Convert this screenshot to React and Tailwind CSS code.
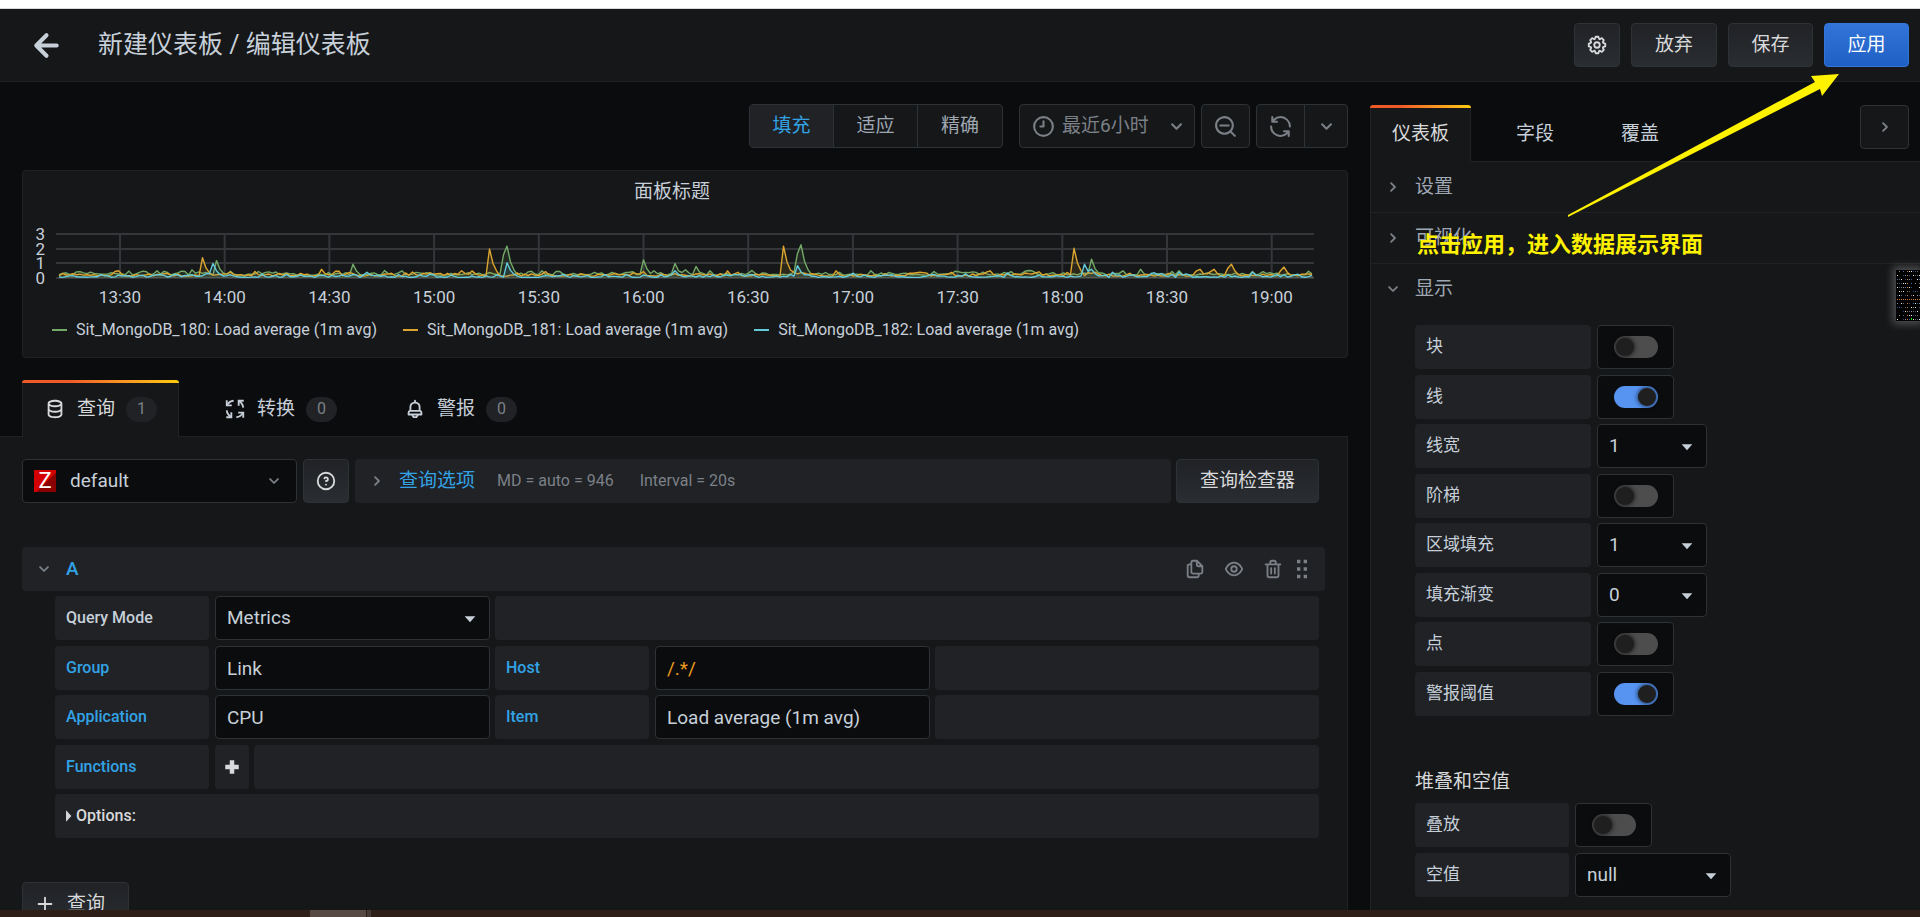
import { useState } from "react";
import clsx from "clsx";

const ICONS = {
	arrowLeft:
		"M17,11H9.41l3.3-3.29a1,1,0,1,0-1.42-1.42l-5,5a1,1,0,0,0-.21.33,1,1,0,0,0,0,.76,1,1,0,0,0,.21.33l5,5a1,1,0,0,0,1.42,0,1,1,0,0,0,0-1.42L9.41,13H17a1,1,0,0,0,0-2Z",
	angleDown:
		"M17,9.17a1,1,0,0,0-1.41,0L12,12.71,8.46,9.17a1,1,0,0,0-1.41,0,1,1,0,0,0,0,1.42l4.24,4.24a1,1,0,0,0,1.42,0L17,10.59A1,1,0,0,0,17,9.17Z",
	angleRight:
		"M14.83,11.29,10.59,7.05a1,1,0,0,0-1.42,0,1,1,0,0,0,0,1.41L12.71,12,9.17,15.54a1,1,0,0,0,0,1.41,1,1,0,0,0,.71.29,1,1,0,0,0,.71-.29l4.24-4.24A1,1,0,0,0,14.83,11.29Z",
	clock: "M12,2A10,10,0,1,0,22,12,10,10,0,0,0,12,2Zm0,18a8,8,0,1,1,8-8A8,8,0,0,1,12,20ZM12,6a1,1,0,0,0-1,1v4H9a1,1,0,0,0,0,2h3a1,1,0,0,0,1-1V7A1,1,0,0,0,12,6Z",
	question:
		"M11.29,15.29a1.58,1.58,0,0,0-.12.15.76.76,0,0,0-.09.18.64.64,0,0,0-.06.18,1.36,1.36,0,0,0,0,.2.84.84,0,0,0,.08.38.9.9,0,0,0,.54.54.94.94,0,0,0,.76,0,.9.9,0,0,0,.54-.54A1,1,0,0,0,13,16a1,1,0,0,0-.29-.71A1,1,0,0,0,11.29,15.29ZM12,2A10,10,0,1,0,22,12,10,10,0,0,0,12,2Zm0,18a8,8,0,1,1,8-8A8,8,0,0,1,12,20ZM12,7A3,3,0,0,0,9.4,8.5a1,1,0,1,0,1.73,1A1,1,0,0,1,12,9a1,1,0,0,1,0,2,1,1,0,1,0,0,2,3,3,0,0,0,0-6Z",
	searchMinus:
		"M21.71,20.29,18,16.61A9,9,0,1,0,16.61,18l3.68,3.68a1,1,0,0,0,1.42,0A1,1,0,0,0,21.71,20.29ZM11,18a7,7,0,1,1,7-7A7,7,0,0,1,11,18Zm4-8H7a1,1,0,0,0,0,2h8a1,1,0,0,0,0-2Z",
	sync: "M19.91,15.51H15.38a1,1,0,0,0,0,2h2.4A8,8,0,0,1,4,12a1,1,0,0,0-2,0,10,10,0,0,0,16.88,7.23V21a1,1,0,0,0,2,0V16.5A1,1,0,0,0,19.91,15.51ZM12,2A10,10,0,0,0,5.12,4.77V3a1,1,0,0,0-2,0V7.5a1,1,0,0,0,1,1h4.5a1,1,0,0,0,0-2H6.22A8,8,0,0,1,20,12a1,1,0,0,0,2,0A10,10,0,0,0,12,2Z",
	cog: "M21.32,9.55l-1.89-.63.89-1.78A1,1,0,0,0,20.13,6L18,3.87a1,1,0,0,0-1.15-.19l-1.78.89-.63-1.89A1,1,0,0,0,13.5,2h-3a1,1,0,0,0-.95.68L8.92,4.57,7.14,3.68A1,1,0,0,0,6,3.87L3.87,6a1,1,0,0,0-.19,1.15l.89,1.78-1.89.63A1,1,0,0,0,2,10.5v3a1,1,0,0,0,.68.95l1.89.63-.89,1.78A1,1,0,0,0,3.87,18L6,20.13a1,1,0,0,0,1.15.19l1.78-.89.63,1.89a1,1,0,0,0,.95.68h3a1,1,0,0,0,.95-.68l.63-1.89,1.78.89A1,1,0,0,0,18,20.13L20.13,18a1,1,0,0,0,.19-1.15l-.89-1.78,1.89-.63A1,1,0,0,0,22,13.5v-3A1,1,0,0,0,21.32,9.55ZM20,12.78l-1.2.4A2,2,0,0,0,17.64,16l.57,1.14-1.1,1.1L16,17.64a2,2,0,0,0-2.79,1.16l-.4,1.2H11.22l-.4-1.2A2,2,0,0,0,8,17.64l-1.14.57-1.1-1.1L6.36,16A2,2,0,0,0,5.2,13.18L4,12.78V11.22l1.2-.4A2,2,0,0,0,6.36,8L5.79,6.89l1.1-1.1L8,6.36A2,2,0,0,0,10.82,5.2l.4-1.2h1.56l.4,1.2A2,2,0,0,0,16,6.36l1.14-.57,1.1,1.1L17.64,8a2,2,0,0,0,1.16,2.79l1.2.4ZM12,8a4,4,0,1,0,4,4A4,4,0,0,0,12,8Zm0,6a2,2,0,1,1,2-2A2,2,0,0,1,12,14Z",
	database:
		"M12,2C8,2,4,3.37,4,6V18c0,2.63,4,4,8,4s8-1.37,8-4V6C20,3.37,16,2,12,2Zm6,16c0,.71-2.28,2-6,2s-6-1.29-6-2V14.73A13.16,13.16,0,0,0,12,16a13.16,13.16,0,0,0,6-1.27Zm0-6c0,.71-2.28,2-6,2s-6-1.29-6-2V8.73A13.16,13.16,0,0,0,12,10a13.16,13.16,0,0,0,6-1.27ZM12,8C8.28,8,6,6.71,6,6s2.28-2,6-2,6,1.29,6,2S15.72,8,12,8Z",
	bell: "M18,13.18V10a6,6,0,0,0-5-5.91V3a1,1,0,0,0-2,0V4.09A6,6,0,0,0,6,10v3.18A3,3,0,0,0,4,16v2a1,1,0,0,0,1,1H8.14a4,4,0,0,0,7.72,0H19a1,1,0,0,0,1-1V16A3,3,0,0,0,18,13.18ZM8,10a4,4,0,0,1,8,0v3H8Zm4,10a2,2,0,0,1-1.72-1h3.44A2,2,0,0,1,12,20Zm6-3H6V16a1,1,0,0,1,1-1H17a1,1,0,0,1,1,1Z",
	eye: "M21.92,11.6C19.9,6.91,16.1,4,12,4S4.1,6.91,2.08,11.6a1,1,0,0,0,0,.8C4.1,17.09,7.9,20,12,20s7.9-2.91,9.92-7.6A1,1,0,0,0,21.92,11.6ZM12,18c-3.17,0-6.17-2.29-7.9-6C5.83,8.29,8.83,6,12,6s6.17,2.29,7.9,6C18.17,15.71,15.17,18,12,18ZM12,8a4,4,0,1,0,4,4A4,4,0,0,0,12,8Zm0,6a2,2,0,1,1,2-2A2,2,0,0,1,12,14Z",
	trash: "M10,18a1,1,0,0,0,1-1V11a1,1,0,0,0-2,0v6A1,1,0,0,0,10,18ZM20,6H16V5a3,3,0,0,0-3-3H11A3,3,0,0,0,8,5V6H4A1,1,0,0,0,4,8H5V19a3,3,0,0,0,3,3h8a3,3,0,0,0,3-3V8h1a1,1,0,0,0,0-2ZM10,5a1,1,0,0,1,1-1h2a1,1,0,0,1,1,1V6H10Zm7,14a1,1,0,0,1-1,1H8a1,1,0,0,1-1-1V8H17Zm-3-1a1,1,0,0,0,1-1V11a1,1,0,0,0-2,0v6A1,1,0,0,0,14,18Z",
	copy: "M21,8.94a1.31,1.31,0,0,0-.06-.27l0-.09a1.07,1.07,0,0,0-.19-.28h0l-6-6h0a1.07,1.07,0,0,0-.28-.19.32.32,0,0,0-.09,0A.88.88,0,0,0,14.05,2H10A3,3,0,0,0,7,5V6H6A3,3,0,0,0,3,9V19a3,3,0,0,0,3,3h8a3,3,0,0,0,3-3V18h1a3,3,0,0,0,3-3V9S21,9,21,8.94ZM15,5.41,17.59,8H16a1,1,0,0,1-1-1ZM15,19a1,1,0,0,1-1,1H6a1,1,0,0,1-1-1V9A1,1,0,0,1,6,8H7v7a3,3,0,0,0,3,3h5Zm4-4a1,1,0,0,1-1,1H10a1,1,0,0,1-1-1V5a1,1,0,0,1,1-1h3V7a3,3,0,0,0,3,3h3Z",
	plus: "M19,11H13V5a1,1,0,0,0-2,0v6H5a1,1,0,0,0,0,2h6v6a1,1,0,0,0,2,0V13h6a1,1,0,0,0,0-2Z",
	plusBold: "M9,3h6v6h6v6h-6v6H9v-6H3V9h6Z",
	caretDown: "M4,8H20L12,17Z",
	caretRight: "M7,2L16,12L7,22Z",
	dots: "M6,1h4v4H6ZM14,1h4v4h-4ZM6,10h4v4H6ZM14,10h4v4h-4ZM6,19h4v4H6ZM14,19h4v4h-4Z",
};

function Icon({ name, className }) {
	return (
		<svg
			viewBox="0 0 24 24"
			fill="currentColor"
			aria-hidden="true"
			className={clsx("shrink-0", className)}
		>
			<path d={ICONS[name]} />
		</svg>
	);
}

function TransformIcon({ className }) {
	return (
		<svg
			viewBox="0 0 24 24"
			fill="none"
			stroke="currentColor"
			strokeWidth="2"
			aria-hidden="true"
			className={clsx("shrink-0", className)}
		>
			<path d="M10.500 3C7.500 3.300 5 5 3.500 7.500M13.500 21c3-.3 5.500-2 7-4.500M3 13.500c.3 3 2 5.500 4.500 7M21 10.500c-.3-3-2-5.500-4.500-7" />
			<path d="M3 2.500V8H8.500M21 21.500V16H15.500M2.500 21H8V15.500M21.500 3H16V8.500" />
		</svg>
	);
}

// [x, value] peaks of each host
const SERIES = [
	{
		name: "Sit_MongoDB_180: Load average (1m avg)",
		color: "#73a866",
		base: 0.2,
		noise: 0.4,
		peaks: [
			[195, 1.2],
			[331, 0.95],
			[482, 1.6],
			[485, 2.2],
			[621, 1.25],
			[653, 1],
			[674, 0.8],
			[688, 0.5],
			[775, 1.7],
			[779, 2.3],
			[849, 0.5],
			[912, 0.45],
			[1068, 1.3],
			[1100, 0.5],
			[1118, 0.6],
		],
	},
	{
		name: "Sit_MongoDB_181: Load average (1m avg)",
		color: "#dba52f",
		base: 0.13,
		noise: 0.38,
		peaks: [
			[178, 1.4],
			[231, 0.45],
			[300, 0.6],
			[440, 0.5],
			[468, 2],
			[762, 2.2],
			[812, 0.5],
			[896, 0.4],
			[968, 0.5],
			[1052, 2.05],
			[1173, 0.5],
			[1178, 0.6],
			[1192, 0.6],
			[1204, 0.7],
			[1209, 0.95],
			[1258, 0.5],
			[1262, 0.75],
		],
	},
	{
		name: "Sit_MongoDB_182: Load average (1m avg)",
		color: "#64c9d9",
		base: 0.04,
		noise: 0.3,
		peaks: [
			[190, 1],
			[343, 0.4],
			[483, 1.05],
			[651, 0.5],
			[773, 0.85],
			[983, 0.35],
			[1063, 0.95],
			[1069, 0.6],
			[1088, 0.4],
			[1157, 0.4],
			[1228, 0.4],
		],
	},
];

const PLOT = { left: 33, right: 1291, zero: 56, unit: 14.5, step: 3.5 };
const TIMES = [
	"13:30",
	"14:00",
	"14:30",
	"15:00",
	"15:30",
	"16:00",
	"16:30",
	"17:00",
	"17:30",
	"18:00",
	"18:30",
	"19:00",
];
const timeX = (i) => 97 + i * 104.7;

function buildPoints({ base, noise, peaks }, seed) {
	const count = Math.floor((PLOT.right - PLOT.left - 3) / PLOT.step);
	let state = seed;
	const random = () => {
		state = (state * 16807) % 2147483647;
		return state / 2147483647;
	};
	let level = 0.5;
	const values = Array.from({ length: count + 1 }, () => {
		level = level * 0.55 + random() * 0.45;
		return base + Math.max(0, level - 0.22) * noise * 1.8 * random();
	});

	peaks.forEach(([x, value]) => {
		const at = Math.round((x - PLOT.left - 3) / PLOT.step);
		[1, 0.5, 0.25].forEach((factor, i) => {
			if (at + i <= count) {
				values[at + i] = Math.max(values[at + i], value * factor);
			}
		});
	});

	return values.map((value, i) => {
		const x = PLOT.left + 3 + i * PLOT.step;
		const y = PLOT.zero - value * PLOT.unit;
		return `${x},${y.toFixed(1)}`;
	});
}

function Graph() {
	return (
		<svg
			viewBox="0 0 1324 90"
			className="block w-full h-auto"
			role="img"
			aria-label="面板标题"
		>
			<g stroke="#34363a" strokeWidth="2">
				{[0, 1, 2, 3].map((n) => (
					<line
						key={n}
						x1={PLOT.left}
						x2={PLOT.right}
						y1={PLOT.zero - Math.round(n * PLOT.unit)}
						y2={PLOT.zero - Math.round(n * PLOT.unit)}
					/>
				))}
				{TIMES.map((time, i) => (
					<line
						key={time}
						x1={timeX(i)}
						x2={timeX(i)}
						y1={12}
						y2={PLOT.zero}
					/>
				))}
			</g>
			{SERIES.map((series, i) => {
				const points = buildPoints(series, 4711 + i * 977);
				return (
					<g key={series.name}>
						<polygon
							points={`${PLOT.left + 3},${PLOT.zero} ${points.join(" ")} ${PLOT.right},${PLOT.zero}`}
							fill={series.color}
							fillOpacity="0.12"
						/>
						<polyline
							points={points.join(" ")}
							fill="none"
							stroke={series.color}
							strokeWidth="1.4"
							strokeLinejoin="round"
						/>
					</g>
				);
			})}
			<g fill="#c7d0d9" fontSize="17">
				{[0, 1, 2, 3].map((n) => (
					<text
						key={n}
						x="22"
						y={PLOT.zero + 6 - Math.round(n * PLOT.unit)}
						textAnchor="end"
					>
						{n}
					</text>
				))}
				{TIMES.map((time, i) => (
					<text key={time} x={timeX(i)} y="81" textAnchor="middle">
						{time}
					</text>
				))}
			</g>
		</svg>
	);
}

function Tab({ active, children, className, onClick }) {
	return (
		<button
			type="button"
			role="tab"
			aria-selected={active}
			onClick={onClick}
			className={clsx(
				"relative flex items-center gap-[11px] h-[57px] -mb-px px-[21px] border border-b-0 rounded-t-sm text-[19px]",
				active
					? "border-[#202226] bg-[#161719] text-[#d8d9da]"
					: "border-transparent text-[#c7d0d9]",
				className
			)}
		>
			{active && (
				<span className="absolute -inset-x-px -top-px h-[3px] rounded-t-sm bg-linear-to-r from-[#f05a28] from-30% to-[#fbca0a]" />
			)}
			{children}
		</button>
	);
}

function Badge({ children }) {
	return (
		<span className="flex items-center justify-center w-[31px] h-[25px] rounded-full bg-[#202226] text-[16px] text-[#7b8087]">
			{children}
		</span>
	);
}

function Button({ className, children, ...props }) {
	return (
		<button
			type="button"
			className={clsx(
				"flex items-center justify-center h-11 rounded-sm border text-[19px]",
				className
			)}
			{...props}
		>
			{children}
		</button>
	);
}

const SECONDARY =
	"border-[#2c3235] bg-linear-to-b from-[#202226] to-[#2a2d31] text-[#d8d9da]";
const TOOLBAR = "border-[#2c3235] bg-[#161719] text-[#7b8087]";

function Select({ id, options, className }) {
	return (
		<span className={clsx("grid h-11", className)}>
			<select
				id={id}
				className="col-start-1 row-start-1 appearance-none w-full h-11 px-[11px] rounded-sm border border-[#2c3235] bg-[#0b0c0e] text-[19px] text-[#c7d0d9]"
			>
				{options.map((option) => (
					<option key={option}>{option}</option>
				))}
			</select>
			<Icon
				name="caretDown"
				className="col-start-1 row-start-1 self-center justify-self-end w-4 h-4 mr-3 mt-0.5 text-[#c7d0d9] pointer-events-none"
			/>
		</span>
	);
}

function Switch({ id, defaultChecked }) {
	return (
		<span className="flex items-center justify-center w-[77px] h-11 rounded-sm border border-[#2c3235] bg-[#0b0c0e]">
			<input
				id={id}
				type="checkbox"
				role="switch"
				defaultChecked={defaultChecked}
				className="appearance-none w-11 h-[22px] p-0.5 rounded-full bg-[#4d4d4d] checked:bg-[#5794f2] before:block before:w-[18px] before:h-[18px] before:rounded-full before:bg-[#1f1f20] before:shadow-[0_0_4px_1px_rgba(0,0,0,0.6)] checked:before:translate-x-[22px]"
			/>
		</span>
	);
}

function OptionRow({ id, label, options, checked, labelClass, selectClass }) {
	return (
		<div className="flex gap-[6px] odd:mb-[6px] even:mb-[5px]">
			<label
				htmlFor={id}
				className={clsx(
					"flex items-center h-11 px-[11px] rounded-sm bg-[#202226] text-[17px] text-[#c7d0d9]",
					labelClass
				)}
			>
				{label}
			</label>
			{options ? (
				<Select id={id} options={options} className={selectClass} />
			) : (
				<Switch id={id} defaultChecked={checked} />
			)}
		</div>
	);
}

function FieldLabel({ htmlFor, children, plain }) {
	return (
		<label
			htmlFor={htmlFor}
			className={clsx(
				"flex items-center shrink-0 w-[154px] h-11 mr-px px-[11px] rounded-sm bg-[#202226] text-[16px] font-medium",
				plain ? "text-[#c7d0d9]" : "text-[#33a2e5]"
			)}
		>
			{children}
		</label>
	);
}

function Field({ id, value, className }) {
	return (
		<input
			id={id}
			type="text"
			defaultValue={value}
			className={clsx(
				"shrink-0 w-[275px] h-11 px-[11px] rounded-sm border border-[#2c3235] bg-[#0b0c0e] text-[19px]",
				className
			)}
		/>
	);
}

function Filler() {
	return <div className="flex-1 h-11 rounded-sm bg-[#202226]" />;
}

const ROW = "flex gap-[5px] odd:mb-[6px] even:mb-[5px]";

function QueryEditor() {
	return (
		<div className="mt-11">
			<div className="flex items-center h-11 -mr-1.5 pl-[11px] pr-[13px] rounded-sm bg-[#202226]">
				<Icon name="angleDown" className="w-[22px] h-[22px] text-[#7b8087]" />
				<span className="flex-1 pl-[11px] text-[19px] font-medium text-[#33a2e5]">
					A
				</span>
				<div className="flex items-center text-[#7b8087]">
					<button type="button" aria-label="复制" className="mr-[17px]">
						<Icon name="copy" className="w-[22px] h-[22px]" />
					</button>
					<button type="button" aria-label="隐藏" className="mr-[17px]">
						<Icon name="eye" className="w-[22px] h-[22px]" />
					</button>
					<button type="button" aria-label="删除" className="mr-2">
						<Icon name="trash" className="w-[22px] h-[22px]" />
					</button>
					<Icon name="dots" className="w-5 h-5" />
				</div>
			</div>

			<div className="mt-[5px] pl-[33px]">
				<div className={ROW}>
					<FieldLabel htmlFor="query-mode" plain>
						Query Mode
					</FieldLabel>
					<Select
						id="query-mode"
						options={["Metrics", "Text"]}
						className="w-[275px]"
					/>
					<Filler />
				</div>
				<div className={ROW}>
					<FieldLabel htmlFor="group">Group</FieldLabel>
					<Field id="group" value="Link" className="text-[#c7d0d9]" />
					<FieldLabel htmlFor="host">Host</FieldLabel>
					<Field id="host" value="/.*/" className="text-[#eb9b1e]" />
					<Filler />
				</div>
				<div className={ROW}>
					<FieldLabel htmlFor="application">Application</FieldLabel>
					<Field id="application" value="CPU" className="text-[#c7d0d9]" />
					<FieldLabel htmlFor="item">Item</FieldLabel>
					<Field
						id="item"
						value="Load average (1m avg)"
						className="text-[#c7d0d9]"
					/>
					<Filler />
				</div>
				<div className={ROW}>
					<FieldLabel htmlFor="functions">Functions</FieldLabel>
					<button
						id="functions"
						type="button"
						className="flex items-center justify-center w-[34px] h-11 rounded-sm bg-[#202226] text-[#d8d9da]"
					>
						<Icon name="plusBold" className="w-[18px] h-[18px]" />
					</button>
					<Filler />
				</div>
				<button
					type="button"
					className="flex items-center gap-1 w-full h-11 px-[11px] rounded-sm bg-[#202226] text-[16px] font-medium text-[#d8d9da]"
				>
					<Icon name="caretRight" className="w-[14px] h-[14px] -mx-1" />
					Options:
				</button>
			</div>
		</div>
	);
}

function QueryPanel() {
	return (
		<div className="flex-1 pt-[22px] pl-[22px] pr-7 mr-[22px] border-r border-[#202226] bg-[#161719]">
			<div className="flex">
				<label className="flex items-center w-[275px] h-11 px-[11px] rounded-sm border border-[#2c3235] bg-[#0b0c0e] text-[#c7d0d9]">
					<span className="flex items-center justify-center w-[22px] h-[22px] bg-linear-135 from-[#d40000] from-55% to-[#8b0000] to-55% text-[22px] leading-[22px] text-white">
						Z
					</span>
					<select
						aria-label="数据源"
						className="flex-1 appearance-none pl-[14px] text-[19px]"
					>
						<option>default</option>
					</select>
					<Icon name="angleDown" className="w-[22px] h-[22px] text-[#7b8087]" />
				</label>
				<Button aria-label="帮助" className={clsx("w-[46px] ml-1.5", SECONDARY)}>
					<Icon name="question" className="w-[22px] h-[22px]" />
				</Button>
				<div className="flex flex-1 items-center h-11 ml-1.5 mr-[5px] pl-[11px] rounded-sm bg-[#202226]">
					<Icon name="angleRight" className="w-[22px] h-[22px] text-[#7b8087]" />
					<a href="#options" className="ml-[11px] text-[19px] text-[#33a2e5]">
						查询选项
					</a>
					<span className="ml-[22px] text-[16px] text-[#7b8087]">
						MD = auto = 946
					</span>
					<span className="ml-[26px] text-[16px] text-[#7b8087]">
						Interval = 20s
					</span>
				</div>
				<Button className={clsx("w-[143px]", SECONDARY)}>查询检查器</Button>
			</div>

			<QueryEditor />

			<Button className={clsx("mt-11 pl-[11px] pr-[23px] gap-[11px]", SECONDARY)}>
				<Icon name="plus" className="w-[22px] h-[22px]" />
				查询
			</Button>
		</div>
	);
}

function SectionHeader({ open, children }) {
	return (
		<button
			type="button"
			aria-expanded={open}
			className="flex items-center gap-[11px] w-full h-[50px] pl-[11px] text-[19px] text-[#9fa7b3]"
		>
			<Icon
				name={open ? "angleDown" : "angleRight"}
				className="w-[22px] h-[22px] text-[#7b8087]"
			/>
			{children}
		</button>
	);
}

const DISPLAY_OPTIONS = [
	{ id: "bars", label: "块" },
	{ id: "lines", label: "线", checked: true },
	{ id: "line-width", label: "线宽", options: ["1", "2", "3"] },
	{ id: "staircase", label: "阶梯" },
	{ id: "area-fill", label: "区域填充", options: ["1", "2", "3"] },
	{ id: "fill-gradient", label: "填充渐变", options: ["0", "1", "2"] },
	{ id: "points", label: "点" },
	{ id: "thresholds", label: "警报阈值", checked: true },
];

function OptionsPane() {
	const [tab, setTab] = useState("仪表板");

	return (
		<aside className="flex flex-col shrink-0 w-[550px] pt-[23px]">
			<div className="flex items-start border-b border-[#202226] pr-[11px]">
				{["仪表板", "字段", "覆盖"].map((name, idx) => (
					<Tab
						key={name}
						active={tab === name}
						onClick={() => setTab(name)}
						className={idx > 0 && "ml-[23px]"}
					>
						{name}
					</Tab>
				))}
				<Button aria-label="收起" className={clsx("w-[49px] ml-auto", TOOLBAR)}>
					<Icon name="angleRight" className="w-[22px] h-[22px]" />
				</Button>
			</div>
			<div className="flex-1 border-l border-[#202226] bg-[#161719]">
				<div className="border-b border-[#202226]">
					<SectionHeader>设置</SectionHeader>
				</div>
				<div className="border-b border-[#202226]">
					<SectionHeader>可视化</SectionHeader>
				</div>
				<SectionHeader open>显示</SectionHeader>
				<div className="pl-11 pt-[11px]">
					<div>
						{DISPLAY_OPTIONS.map((option) => (
							<OptionRow
								key={option.id}
								{...option}
								labelClass="w-44"
								selectClass="w-[110px]"
							/>
						))}
					</div>
					<h6 className="mt-[52px] mb-[7px] text-[19px] leading-7 text-[#d8d9da]">
						堆叠和空值
					</h6>
					<div>
						<OptionRow id="stack" label="叠放" labelClass="w-[154px]" />
						<OptionRow
							id="null-value"
							label="空值"
							options={["null", "connected", "null as zero"]}
							labelClass="w-[154px]"
							selectClass="w-[156px]"
						/>
					</div>
				</div>
			</div>
		</aside>
	);
}

function Toolbar() {
	const [mode, setMode] = useState("填充");

	return (
		<div className="flex justify-end pr-[22px]">
			<div className="flex h-11 rounded-sm border border-[#2c3235] divide-x divide-[#2c3235] bg-[#161719]">
				{["填充", "适应", "精确"].map((name) => (
					<button
						key={name}
						type="button"
						onClick={() => setMode(name)}
						className={clsx(
							"w-[84px] text-[19px]",
							mode === name
								? "bg-[#202226] text-[#33a2e5]"
								: "text-[#9fa7b3]"
						)}
					>
						{name}
					</button>
				))}
			</div>
			<Button className={clsx("w-44 ml-4 px-[11px]", TOOLBAR)}>
				<Icon name="clock" className="w-[25px] h-[25px]" />
				<span className="flex-1 pl-[6px] text-left">最近6小时</span>
				<Icon name="angleDown" className="w-[25px] h-[25px] -mr-[6px]" />
			</Button>
			<Button aria-label="缩小" className={clsx("w-[49px] ml-1.5", TOOLBAR)}>
				<Icon name="searchMinus" className="w-[25px] h-[25px]" />
			</Button>
			<Button
				aria-label="刷新"
				className={clsx("w-[49px] ml-1.5 rounded-r-none", TOOLBAR)}
			>
				<Icon name="sync" className="w-[25px] h-[25px]" />
			</Button>
			<Button
				aria-label="刷新间隔"
				className={clsx("w-11 -ml-px rounded-l-none", TOOLBAR)}
			>
				<Icon name="angleDown" className="w-[25px] h-[25px]" />
			</Button>
		</div>
	);
}

function Annotation() {
	return (
		<>
			<svg
				viewBox="0 0 360 230"
				className="absolute top-0 right-0 w-[360px] h-[230px] pointer-events-none"
				aria-hidden="true"
			>
				<path d="M8 215L255 82L251 76L279 74L262 96L260 89L8 217Z" fill="#fff200" />
			</svg>
			<p className="absolute top-[229px] right-[217px] text-[22px] leading-8 font-bold text-[#fff200] pointer-events-none">
				点击应用，进入数据展示界面
			</p>
		</>
	);
}

// scaled-down code thumbnail docked to the window edge
function Thumbnail() {
	const colors = ["#8a8f99", "#4a6fa5", "#c77b3b", "#e6e6e6", "#2f4f7a", "#6b6b6b"];
	const cells = [];
	for (let row = 0; row < 13; row++) {
		for (let col = 0; col < 12; col++) {
			const n = (row * 31 + col * 17 + row * col * 7) % 11;
			if (n > 2) cells.push([col * 2 + 1, row * 4 + 1, colors[n % 6]]);
		}
	}
	return (
		<svg
			viewBox="0 0 24 51"
			className="absolute top-[270px] right-0 w-6 h-[51px] bg-black shadow-[0_0_8px_3px_rgba(255,255,255,0.25)]"
			aria-hidden="true"
		>
			{cells.map(([x, y, fill]) => (
				<rect key={`${x}-${y}`} x={x} y={y} width="1" height="1" fill={fill} />
			))}
			<rect x="15" y="48" width="1" height="2" fill="#00ff00" />
		</svg>
	);
}

export default function App() {
	const [tab, setTab] = useState("查询");

	return (
		<div className="relative flex flex-col h-screen overflow-hidden bg-[#0b0c0e] font-['Roboto','Noto_Sans_CJK_SC',sans-serif] text-[#c7d0d9]">
			<div className="shrink-0 h-[9px] border-b border-[#d8d9da] bg-white" />
			<header className="flex shrink-0 items-center h-[73px] pl-[30px] pr-[11px] border-b border-[#202226] bg-[#161719]">
				<button type="button" aria-label="返回">
					<Icon name="arrowLeft" className="w-[49px] h-[49px] -ml-2" />
				</button>
				<h1 className="flex-1 pl-[27px] text-[25px]">新建仪表板 / 编辑仪表板</h1>
				<div className="flex gap-[11px]">
					<Button aria-label="设置" className={clsx("w-[46px]", SECONDARY)}>
						<Icon name="cog" className="w-[22px] h-[22px]" />
					</Button>
					<Button className={clsx("w-[86px]", SECONDARY)}>放弃</Button>
					<Button className={clsx("w-[85px]", SECONDARY)}>保存</Button>
					<Button className="w-[85px] border-[#3274d9] bg-linear-to-b from-[#3274d9] to-[#1f60c4] text-white">
						应用
					</Button>
				</div>
			</header>

			<div className="flex flex-1 min-h-0 overflow-hidden">
				<main className="flex flex-col flex-1 min-w-0 pt-[22px]">
					<Toolbar />
					<section className="mt-[22px] mx-[22px] pb-[15px] rounded-sm border border-[#202226] bg-[#161719]">
						<h2 className="pt-[7px] pr-[26px] text-center text-[19px] leading-7">
							面板标题
						</h2>
						<div className="pt-4">
							<Graph />
						</div>
						<ul className="flex gap-[26px] mt-[6px] pl-[29px] text-[16px] leading-6 text-[#c7d0d9]">
							{SERIES.map((series) => (
								<li key={series.name} className="flex items-center gap-[9px]">
									<span
										className="w-[15px] h-0.5"
										style={{ backgroundColor: series.color }}
									/>
									{series.name}
								</li>
							))}
						</ul>
					</section>

					<div className="flex mt-[22px] mr-[22px] pl-[22px] border-b border-[#202226]">
						<Tab active={tab === "查询"} onClick={() => setTab("查询")}>
							<Icon name="database" className="w-[22px] h-[22px]" />
							查询
							<Badge>1</Badge>
						</Tab>
						<Tab
							active={tab === "转换"}
							onClick={() => setTab("转换")}
							className="ml-[23px]"
						>
							<TransformIcon className="w-[22px] h-[22px]" />
							转换
							<Badge>0</Badge>
						</Tab>
						<Tab
							active={tab === "警报"}
							onClick={() => setTab("警报")}
							className="ml-[23px]"
						>
							<Icon name="bell" className="w-[22px] h-[22px]" />
							警报
							<Badge>0</Badge>
						</Tab>
					</div>
					<QueryPanel />
				</main>
				<OptionsPane />
			</div>

			<footer className="flex shrink-0 h-[7px] bg-[#2e2019]">
				<div className="w-14 ml-[310px] bg-[#574a44]" />
				<div className="w-1 ml-px bg-[#453a35]" />
			</footer>

			<Annotation />
			<Thumbnail />
		</div>
	);
}
